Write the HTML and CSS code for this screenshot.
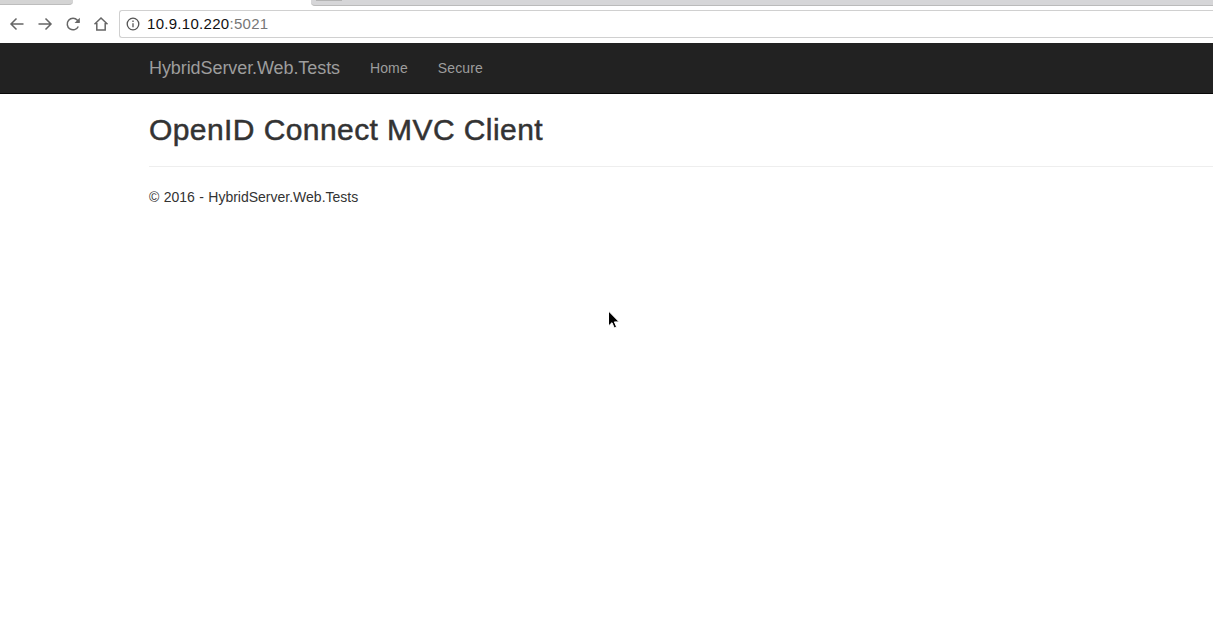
FILE: index.html
```html
<!DOCTYPE html>
<html lang="en">
<head>
<meta charset="utf-8">
<title>OpenID Connect MVC Client</title>
<link rel="stylesheet" href="styles.css">
</head>
<body>
<header class="chrome">
  <div class="tabstrip">
    <div class="tab-left"></div>
    <div class="tab-active"></div>
    <div class="tab-right"><span class="tab-stub"></span></div>
  </div>
  <div class="toolbar">
    <svg class="tool" viewBox="0 0 16 16" width="16" height="16" aria-hidden="true"><path d="M14.5 8H2M7.5 2.5 2 8l5.500 5.500"/></svg>
    <svg class="tool" viewBox="0 0 16 16" width="16" height="16" aria-hidden="true"><path d="M1.500 8H14M8.500 2.500 14 8l-5.500 5.500"/></svg>
    <svg class="tool" viewBox="0 0 16 16" width="16" height="16" aria-hidden="true"><path d="M13.300 10.500A5.800 5.800 0 1 1 12.400 4.200L14 6"/><path class="fill" d="M14.800 1.800v5.200H9.600z"/></svg>
    <svg class="tool" viewBox="0 0 16 16" width="16" height="16" aria-hidden="true"><path d="M1.500 8.300 8 2l6.500 6.300M3.800 7v7h8.400V7"/></svg>
    <div class="omnibox">
      <svg class="info" viewBox="0 0 14 14" width="14" height="14" aria-hidden="true"><circle cx="7" cy="7" r="5.800"/><path d="M7 6.200v4"/><path d="M7 3.500v1.500"/></svg>
      <span class="host">10.9.10.220</span><span class="port">:5021</span>
    </div>
  </div>
</header>
<nav class="navbar">
  <div class="nav-inner">
    <a class="brand" href="#">HybridServer.Web.Tests</a>
    <a class="nav-link" href="#">Home</a>
    <a class="nav-link" href="#">Secure</a>
  </div>
</nav>
<main class="container">
  <h1 class="title">OpenID Connect MVC Client</h1>
  <hr class="rule">
  <footer class="foot">© 2016 - HybridServer.Web.Tests</footer>
</main>
<svg class="cursor" viewBox="0 0 14 20" width="14" height="20" aria-hidden="true"><path d="M1.500 1v15l3.500-3.300 2.200 5.200 2.400-1-2.200-5h4.800z"/></svg>
</body>
</html>
```
FILE: styles.css
```css
* { box-sizing: border-box; }
html, body { margin: 0; height: 100%; }
body {
  background: #fff;
  font-family: "Liberation Sans", Arial, sans-serif;
  font-size: 14px;
  line-height: 20px;
  color: #333;
  overflow: hidden;
  position: relative;
}
.chrome { height: 43px; background: #fff; }
.tabstrip { display: flex; height: 6px; }
.tab-left { width: 73px; height: 5px; background: #d4d4d4; border-bottom: 1px solid #bdbdbd; border-bottom-right-radius: 4px; }
.tab-active { width: 238px; background: #fff; }
.tab-right { flex: 1; height: 6px; background: #d6d6d8; border-bottom: 1px solid #bbb; border-bottom-left-radius: 4px; padding-left: 5px; }
.tab-stub { display: block; width: 26px; height: 1px; background: #b4b4b4; }
.toolbar { display: flex; align-items: center; height: 36px; padding: 0 0 0 9px; }
.tool { margin-right: 12px; flex: none; fill: none; stroke: #666; stroke-width: 1.500; }
.tool .fill { fill: #666; stroke: none; }
.omnibox {
  display: flex;
  align-items: center;
  flex: 1;
  height: 28px;
  margin-left: -2px;
  padding-left: 6px;
  border: 1px solid #d0d0d0;
  border-right: 0;
  border-radius: 3px 0 0 3px;
  font-size: 15px;
  letter-spacing: 0.290px;
}
.info { margin-right: 7px; fill: none; stroke: #555; stroke-width: 1.300; }
.host { color: #111; }
.port { color: #777; }
.navbar { height: 51px; background: #222; border-bottom: 1px solid #080808; }
.nav-inner { display: flex; align-items: center; height: 50px; padding-left: 149px; }
.brand { font-size: 18px; color: #9d9d9d; text-decoration: none; margin-right: 30px; letter-spacing: -0.080px; }
.nav-link { color: #9d9d9d; text-decoration: none; margin-right: 30px; letter-spacing: 0.120px; }
.container { margin-left: 134px; padding-left: 15px; }
.title { margin: 19px 0 10px; font-size: 30px; line-height: 33px; font-weight: 500; color: #333; letter-spacing: 0.420px; -webkit-text-stroke: 0.500px #333; }
.rule { margin: 20px 0; border: 0; border-top: 1px solid #eee; }
.foot { color: #333; word-spacing: 0.500px; }
.cursor { position: absolute; left: 607px; top: 310px; fill: #000; stroke: #fff; stroke-width: 1; }
```
